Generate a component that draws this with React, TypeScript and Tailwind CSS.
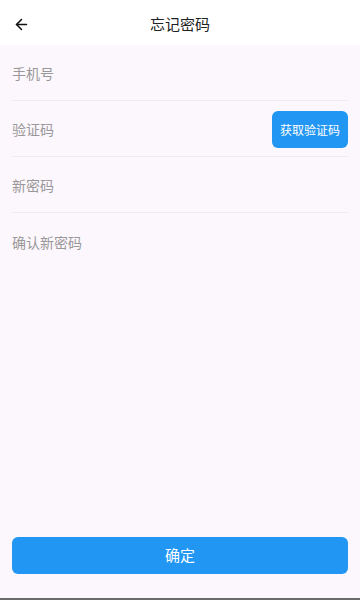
import { ArrowLeft } from "lucide-react";

const FONT = { fontFamily: '"Noto Sans CJK SC", "Noto Sans", sans-serif' };

function Field({ placeholder, divider = true, children }: { placeholder: string; divider?: boolean; children?: React.ReactNode }) {
  return (
    <div className={`flex h-14 items-center ${divider ? "border-b border-[#f0ebf0]" : ""}`}>
      <input
        placeholder={placeholder}
        className="min-w-0 flex-1 bg-transparent pt-[2px] text-[14px] text-[#333] outline-none placeholder:text-[#9a979a]"
      />
      {children}
    </div>
  );
}

export default function App() {
  return (
    <div className="flex h-[600px] w-[360px] flex-col bg-[#fcf7fc]" style={FONT}>
      {/* Header */}
      <div className="relative flex h-[45px] shrink-0 items-center justify-center bg-white pt-[3px]">
        <button className="absolute left-[13px] top-[16px] text-[#111]">
          <ArrowLeft className="h-[17px] w-[17px]" strokeWidth={2.2} />
        </button>
        <h1 className="text-[15px] text-[#222]">忘记密码</h1>
      </div>

      {/* Form */}
      <div className="px-3">
        <Field placeholder="手机号" />
        <Field placeholder="验证码">
          <button className="mt-[2px] h-[37px] w-[76px] shrink-0 rounded-md bg-[#2196f3] text-[12px] text-white">
            获取验证码
          </button>
        </Field>
        <Field placeholder="新密码" />
        <Field placeholder="确认新密码" divider={false} />
      </div>

      {/* Submit */}
      <div className="mt-auto px-3 pb-6">
        <button className="h-[37px] w-full rounded-md bg-[#2196f3] text-[15px] text-white">确定</button>
      </div>
      <div className="h-[2px] shrink-0 bg-[#6b6b6b]" />
    </div>
  );
}
